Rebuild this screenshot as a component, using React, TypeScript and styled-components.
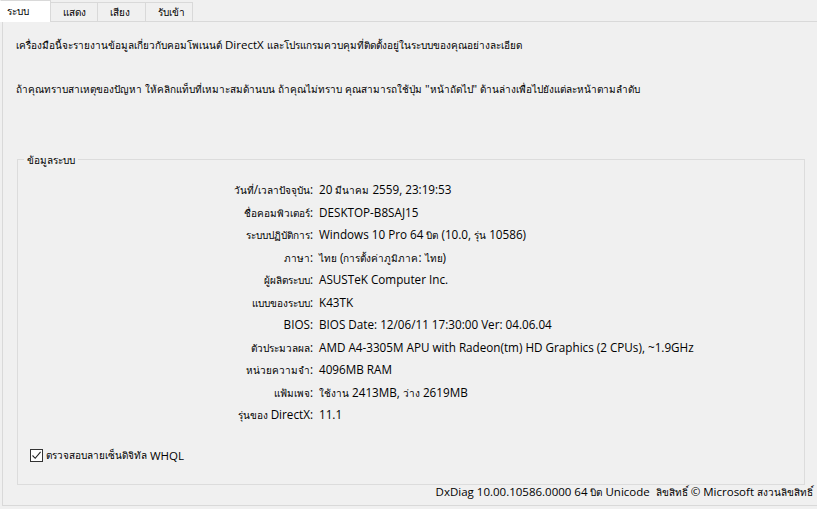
import { Fragment, ReactNode, useState } from "react";
import styled, { createGlobalStyle } from "styled-components";

const GlobalStyle = createGlobalStyle`
    html, body {
        margin: 0;
        padding: 0;
        background-color: #f0f0f0;
    }
    body {
        font-family: "Segoe UI", "Open Sans", "Noto Sans", "Liberation Sans", sans-serif;
        font-size: 11.7px;
        color: #000;
    }
`;

// Thai runs are drawn a little smaller, like the Tahoma fallback in the real dialog
const ThaiRun = styled.span`
    font-size: 10px;
`;

function thai(text: string): ReactNode {
    return text.split(/([\u0E00-\u0E7F]+)/).map((part, i) =>
        /[\u0E00-\u0E7F]/.test(part) ? <ThaiRun key={i}>{part}</ThaiRun> : <Fragment key={i}>{part}</Fragment>
    );
}

const Window = styled.div`
    width: 817px;
    height: 509px;
    display: flex;
    flex-direction: column;
    overflow: hidden;
    background-color: #f0f0f0;
`;

const TabStrip = styled.div`
    display: flex;
    align-items: flex-end;
    height: 22px;
    margin-bottom: -1px;
    position: relative;
    z-index: 1;
`;

const Tab = styled.div<{ $active?: boolean; $width: number }>`
    box-sizing: border-box;
    width: ${(p) => p.$width}px;
    height: ${(p) => (p.$active ? "22px" : "20px")};
    padding-left: ${(p) => (p.$active ? "6px" : "12px")};
    display: flex;
    align-items: center;
    background-color: ${(p) => (p.$active ? "#ffffff" : "#f0f0f0")};
    border: 1px solid #d9d9d9;
    border-bottom: ${(p) => (p.$active ? "1px solid #ffffff" : "1px solid #d9d9d9")};
    margin-left: -1px;
    &:first-child {
        margin-left: 0;
        border-left-color: #ffffff;
    }
`;

const Panel = styled.div`
    flex: 1;
    margin-left: 2px;
    margin-bottom: 3px;
    border: 1px solid #d9d9d9;
    border-right: none;
    display: flex;
    flex-direction: column;
    padding: 0 4px 0 13px;
`;

const Intro = styled.p<{ $gap: number }>`
    margin: ${(p) => p.$gap}px 0 0;
    line-height: 16px;
    font-size: 11.5px;
`;

const GroupBox = styled.fieldset`
    margin: 55px 0 0 1px;
    width: 788px;
    height: 333px;
    box-sizing: border-box;
    border: 1px solid #dcdcdc;
    padding: 0;
`;

const Legend = styled.legend`
    margin-left: 6px;
    padding: 0 3px;
    line-height: 14px;
`;

const InfoGrid = styled.div`
    display: grid;
    grid-template-columns: 295px 1fr;
    column-gap: 6px;
    margin-top: 11px;
`;

const Label = styled.div`
    text-align: right;
    height: 22.5px;
    line-height: 22.5px;
    white-space: nowrap;
`;

const Value = styled.div`
    height: 22.5px;
    line-height: 22.5px;
    white-space: nowrap;
`;

const CheckRow = styled.label`
    margin: 22px 0 0 12px;
    display: flex;
    align-items: center;
    gap: 3px;
    font-size: 11.5px;
    cursor: default;
`;

const CheckBox = styled.span`
    width: 13px;
    height: 13px;
    box-sizing: border-box;
    border: 1px solid #333;
    background-color: #fff;
    display: flex;
    align-items: center;
    justify-content: center;
`;

const Footer = styled.div`
    text-align: right;
    line-height: 14px;
    white-space: nowrap;
    font-size: 11.5px;
`;

const rows: [string, string][] = [
    ["วันที่/เวลาปัจจุบัน:", "20 มีนาคม 2559, 23:19:53"],
    ["ชื่อคอมพิวเตอร์:", "DESKTOP-B8SAJ15"],
    ["ระบบปฏิบัติการ:", "Windows 10 Pro 64 บิต (10.0, รุ่น 10586)"],
    ["ภาษา:", "ไทย (การตั้งค่าภูมิภาค: ไทย)"],
    ["ผู้ผลิตระบบ:", "ASUSTeK Computer Inc."],
    ["แบบของระบบ:", "K43TK"],
    ["BIOS:", "BIOS Date: 12/06/11 17:30:00 Ver: 04.06.04"],
    ["ตัวประมวลผล:", "AMD A4-3305M APU with Radeon(tm) HD Graphics (2 CPUs), ~1.9GHz"],
    ["หน่วยความจำ:", "4096MB RAM"],
    ["แฟ้มเพจ:", "ใช้งาน 2413MB, ว่าง 2619MB"],
    ["รุ่นของ DirectX:", "11.1"],
];

const tabs: [string, number][] = [
    ["ระบบ", 51],
    ["แสดง", 48],
    ["เสียง", 49],
    ["รับเข้า", 48],
];

function App() {
    const [active, setActive] = useState(0);
    const [whql, setWhql] = useState(true);

    return (
        <Window>
            <GlobalStyle />
            <TabStrip>
                {tabs.map(([t, w], i) => (
                    <Tab key={t} $width={w} $active={i === active} onClick={() => setActive(i)}>
                        {thai(t)}
                    </Tab>
                ))}
            </TabStrip>
            <Panel>
                <Intro $gap={15}>
                    {thai("เครื่องมือนี้จะรายงานข้อมูลเกี่ยวกับคอมโพเนนต์ DirectX และโปรแกรมควบคุมที่ติดตั้งอยู่ในระบบของคุณอย่างละเอียด")}
                </Intro>
                <Intro $gap={28}>
                    {thai('ถ้าคุณทราบสาเหตุของปัญหา ให้คลิกแท็บที่เหมาะสมด้านบน ถ้าคุณไม่ทราบ คุณสามารถใช้ปุ่ม "หน้าถัดไป" ด้านล่างเพื่อไปยังแต่ละหน้าตามลำดับ')}
                </Intro>
                <GroupBox>
                    <Legend>{thai("ข้อมูลระบบ")}</Legend>
                    <InfoGrid>
                        {rows.map(([k, v]) => (
                            <Fragment key={k}>
                                <Label>{thai(k)}</Label>
                                <Value>{thai(v)}</Value>
                            </Fragment>
                        ))}
                    </InfoGrid>
                    <CheckRow onClick={() => setWhql(!whql)}>
                        <CheckBox>
                            {whql && (
                                <svg width="11" height="11" viewBox="0 0 11 11">
                                    <path d="M1.5 5.5 L4.2 8.3 L9.6 1.8" fill="none" stroke="#222" strokeWidth="1.1" />
                                </svg>
                            )}
                        </CheckBox>
                        {thai("ตรวจสอบลายเซ็นดิจิทัล WHQL")}
                    </CheckRow>
                </GroupBox>
                <Footer>
                    {thai("DxDiag 10.00.10586.0000 64 บิต Unicode ")}&nbsp;{thai("ลิขสิทธิ์ © Microsoft สงวนลิขสิทธิ์")}
                </Footer>
            </Panel>
        </Window>
    );
}

export default App;
